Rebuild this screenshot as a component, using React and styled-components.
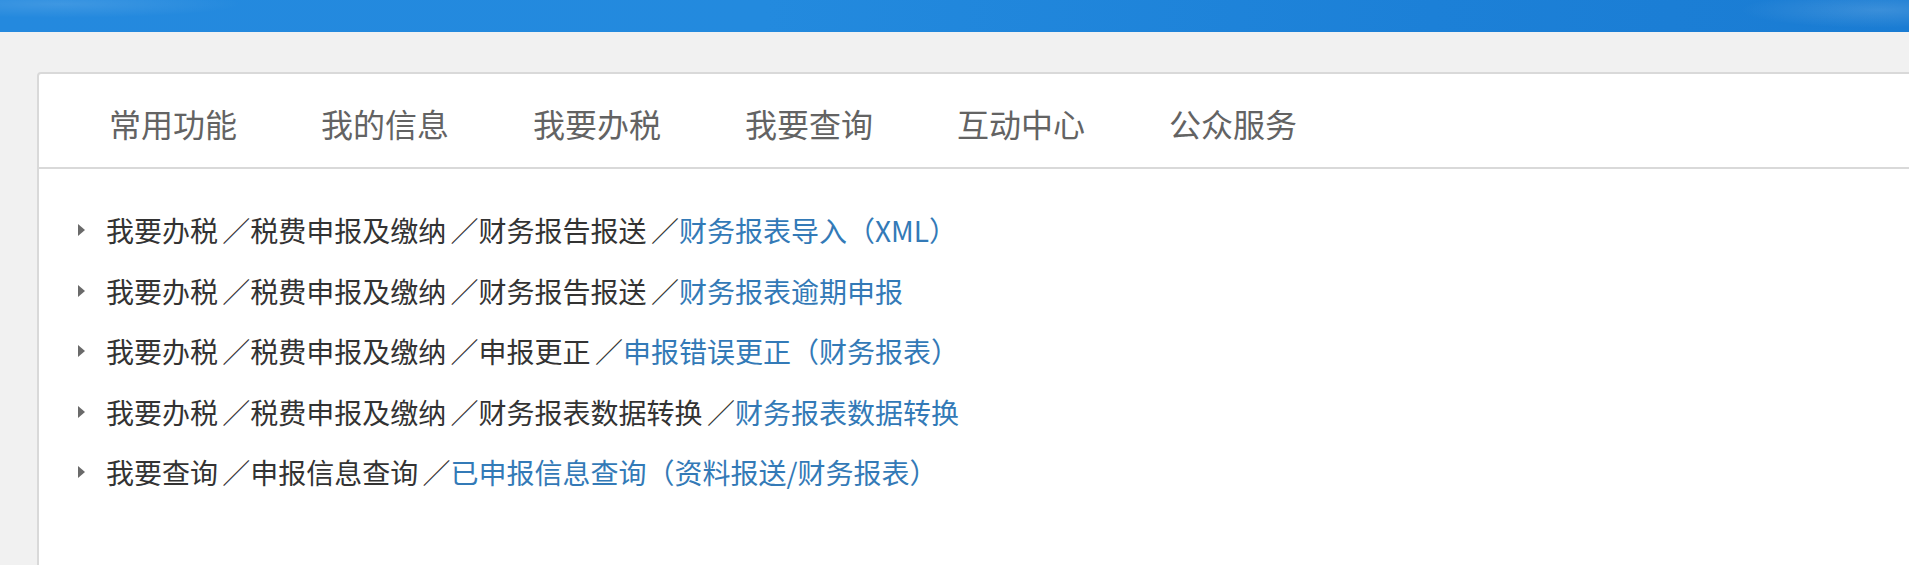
import React from 'react';
import styled, { createGlobalStyle } from 'styled-components';

const tabs = ['常用功能', '我的信息', '我要办税', '我要查询', '互动中心', '公众服务'];

const paths = [
    { crumbs: ['我要办税', '税费申报及缴纳', '财务报告报送'], link: '财务报表导入（XML）' },
    { crumbs: ['我要办税', '税费申报及缴纳', '财务报告报送'], link: '财务报表逾期申报' },
    { crumbs: ['我要办税', '税费申报及缴纳', '申报更正'], link: '申报错误更正（财务报表）' },
    { crumbs: ['我要办税', '税费申报及缴纳', '财务报表数据转换'], link: '财务报表数据转换' },
    { crumbs: ['我要查询', '申报信息查询'], link: '已申报信息查询（资料报送/财务报表）' },
];

const App = () => {
    return (
        <Page>
            <GlobalStyle />
            <TopBand />
            <Main>
                <Card>
                    <TabBar>
                        {tabs.map((t) => (
                            <Tab key={t}>{t}</Tab>
                        ))}
                    </TabBar>
                    <PathList>
                        {paths.map((p, i) => (
                            <PathRow key={i}>
                                <Caret />
                                {p.crumbs.map((c, j) => (
                                    <Crumb key={j}>{c} ／</Crumb>
                                ))}
                                <PathLink href="#">{p.link}</PathLink>
                            </PathRow>
                        ))}
                    </PathList>
                </Card>
            </Main>
        </Page>
    );
};

export default App;

// Style
const GlobalStyle = createGlobalStyle`
    html, body {
        margin: 0;
        padding: 0;
        background: #f1f1f1;
        overflow: hidden;
    }
    body {
        font-family: "Noto Sans CJK SC", "Noto Sans", sans-serif;
    }
`;

const
    Page = styled.div`
    width: 1909px;
    height: 565px;
    background: #f1f1f1;
    overflow: hidden;
`,
    TopBand = styled.div`
    height: 32px;
    background:
        radial-gradient(ellipse 260px 20px at 60px 4px, rgba(255, 255, 255, 0.12), transparent 70%),
        radial-gradient(ellipse 200px 26px at 1880px 10px, rgba(255, 255, 255, 0.14), transparent 70%),
        linear-gradient(90deg, #2489de 0%, #238ade 40%, #1c80d7 75%, #1a7cd3 100%);
`,
    Main = styled.div`
    padding: 40px 0 0 37px;
`,
    Card = styled.div`
    margin-right: -20px;
    height: 520px;
    background: #fff;
    border: 2px solid #d9d9d9;
    border-radius: 4px;
`,
    TabBar = styled.div`
    display: flex;
    height: 93px;
    align-items: center;
    padding-left: 28px;
    border-bottom: 2px solid #d9d9d9;
`,
    Tab = styled.div`
    padding: 0 42px;
    font-size: 32px;
    line-height: 40px;
    color: #636363;
    cursor: pointer;
    margin-top: 4px;
`,
    PathList = styled.div`
    display: flex;
    flex-direction: column;
    padding: 41px 0 0 39px;
    gap: 20.5px;
`,
    PathRow = styled.div`
    display: flex;
    align-items: center;
    height: 40px;
    font-size: 28px;
    color: #333;
    white-space: pre;
    word-spacing: -2px;
`,
    Caret = styled.span`
    width: 0;
    height: 0;
    border-top: 6px solid transparent;
    border-bottom: 6px solid transparent;
    border-left: 7px solid #6a6a6a;
    margin-right: 21px;
`,
    Crumb = styled.span`
    margin-right: 0;
`,
    PathLink = styled.a`
    color: #337ab7;
    text-decoration: none;
`;
